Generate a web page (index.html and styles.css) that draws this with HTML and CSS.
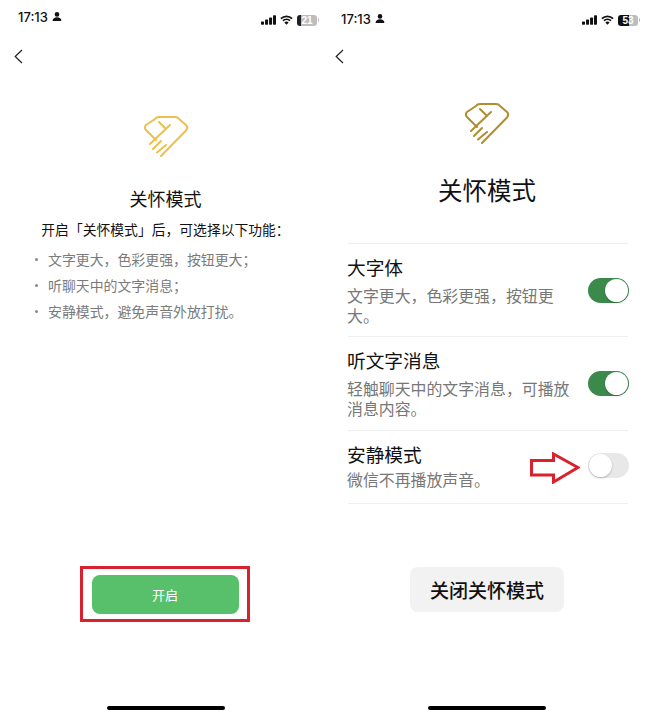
FILE: index.html
```html
<!DOCTYPE html>
<html lang="zh-CN">
<head>
    <meta charset="UTF-8">
    <meta name="viewport" content="width=device-width, initial-scale=1.0">
    <title>关怀模式</title>
    <link rel="stylesheet" href="styles.css">
</head>
<body>
    <div class="screens">
        <!-- Before turning it on -->
        <section class="phone phone-intro">
            <div class="status-bar">
                <div class="status-time">
                    <span>17:13</span>
                    <svg class="person-icon" viewBox="0 0 10 9"><circle cx="5" cy="2.4" r="2.3"/><path d="M.6 9c0-2.6 2-3.7 4.4-3.7S9.400 6.400 9.400 9z"/></svg>
                </div>
                <div class="status-icons">
                    <svg class="signal-icon" viewBox="0 0 16 10"><rect x="0" y="6.500" width="3.200" height="3.500" rx=".7"/><rect x="4.300" y="4.500" width="3.200" height="5.500" rx=".7"/><rect x="8.600" y="2.300" width="3.200" height="7.700" rx=".7"/><rect x="12.800" y="0" width="3.200" height="10" rx=".7"/></svg>
                    <svg class="wifi-icon" viewBox="0 0 14 10"><path d="M1 3.500a8.500 8.500 0 0 1 12 0M3.200 5.800a5.400 5.400 0 0 1 7.600 0" fill="none" stroke="#111" stroke-width="1.900"/><path d="M7 10 4.700 7.700a3.200 3.200 0 0 1 4.600 0z"/></svg>
                    <div class="battery battery-low"><span class="battery-level">21</span></div>
                </div>
            </div>
            <div class="nav">
                <svg class="back-icon" viewBox="0 0 9 15"><path d="M8 1 1.200 7.500 8 14"/></svg>
            </div>
            <main class="intro">
                <svg class="care-icon care-icon-light" viewBox="0 0 46 44"><path d="M27 11 7 30M16 8l7 7M18 27l-8 8M23 31l-9 7.500M18 42 43 16.500c1.500-2 1.500-4 0-5.500L36 5c-1-1.500-2-2-4-2H16c-2 0-3 .5-4 2L3 11c-1.500 1.500-1.500 3.500 0 5L13 26"/></svg>
                <h1 class="intro-title">关怀模式</h1>
                <p class="intro-lead">开启「关怀模式」后，可选择以下功能：</p>
                <ul class="intro-list">
                    <li>文字更大，色彩更强，按钮更大；</li>
                    <li>听聊天中的文字消息；</li>
                    <li>安静模式，避免声音外放打扰。</li>
                </ul>
                <div class="highlight-frame">
                    <button class="open-button">开启</button>
                </div>
            </main>
            <div class="home-bar"></div>
        </section>

        <!-- After turning it on -->
        <section class="phone phone-settings">
            <div class="status-bar status-bar-low">
                <div class="status-time">
                    <span>17:13</span>
                    <svg class="person-icon" viewBox="0 0 10 9"><circle cx="5" cy="2.4" r="2.3"/><path d="M.6 9c0-2.6 2-3.7 4.4-3.7S9.400 6.400 9.400 9z"/></svg>
                </div>
                <div class="status-icons">
                    <svg class="signal-icon" viewBox="0 0 16 10"><rect x="0" y="6.500" width="3.200" height="3.500" rx=".7"/><rect x="4.300" y="4.500" width="3.200" height="5.500" rx=".7"/><rect x="8.600" y="2.300" width="3.200" height="7.700" rx=".7"/><rect x="12.800" y="0" width="3.200" height="10" rx=".7"/></svg>
                    <svg class="wifi-icon" viewBox="0 0 14 10"><path d="M1 3.500a8.500 8.500 0 0 1 12 0M3.200 5.800a5.400 5.400 0 0 1 7.600 0" fill="none" stroke="#111" stroke-width="1.900"/><path d="M7 10 4.700 7.700a3.200 3.200 0 0 1 4.600 0z"/></svg>
                    <div class="battery battery-half"><span class="battery-level">53</span></div>
                </div>
            </div>
            <div class="nav nav-settings">
                <svg class="back-icon" viewBox="0 0 9 15"><path d="M8 1 1.200 7.500 8 14"/></svg>
            </div>
            <main class="settings">
                <svg class="care-icon care-icon-dark" viewBox="0 0 46 44"><path d="M27 11 7 30M16 8l7 7M18 27l-8 8M23 31l-9 7.500M18 42 43 16.500c1.500-2 1.500-4 0-5.500L36 5c-1-1.500-2-2-4-2H16c-2 0-3 .5-4 2L3 11c-1.500 1.500-1.500 3.500 0 5L13 26"/></svg>
                <h1 class="settings-title">关怀模式</h1>
                <div class="setting-list">
                    <div class="setting-row">
                        <div class="setting-text">
                            <div class="setting-name">大字体</div>
                            <div class="setting-desc">文字更大，色彩更强，按钮更大。</div>
                        </div>
                        <div class="toggle toggle-on"><span class="toggle-thumb"></span></div>
                    </div>
                    <div class="setting-row">
                        <div class="setting-text">
                            <div class="setting-name">听文字消息</div>
                            <div class="setting-desc">轻触聊天中的文字消息，可播放消息内容。</div>
                        </div>
                        <div class="toggle toggle-on"><span class="toggle-thumb"></span></div>
                    </div>
                    <div class="setting-row setting-row-short">
                        <div class="setting-text">
                            <div class="setting-name">安静模式</div>
                            <div class="setting-desc">微信不再播放声音。</div>
                        </div>
                        <svg class="red-arrow" viewBox="0 0 50 32"><path d="M1.500 8.500h22V2L48 15.500 23.500 30V23h-22z"/></svg>
                        <div class="toggle"><span class="toggle-thumb"></span></div>
                    </div>
                </div>
                <button class="close-button">关闭关怀模式</button>
            </main>
            <div class="home-bar"></div>
        </section>
    </div>
</body>
</html>
```

FILE: styles.css
```css
* {
    box-sizing: border-box;
}
body {
    margin: 0;
    background-color: #fff;
    color: #111;
    font-family: "Noto Sans CJK SC", "Noto Sans", sans-serif;
}
h1, p, ul {
    margin: 0;
    padding: 0;
}
button {
    border: none;
    font-family: inherit;
}
.screens {
    display: grid;
    grid-template-columns: 326px 322px;
    height: 717px;
    overflow: hidden;
}
.phone {
    display: flex;
    flex-direction: column;
    height: 717px;
}

/* status bar */
.status-bar {
    display: flex;
    justify-content: space-between;
    align-items: flex-start;
    height: 37px;
    padding: 9px 9px 0 18px;
}
.status-bar-low {
    padding: 11px 10px 0 15px;
}
.status-time {
    display: flex;
    align-items: center;
    gap: 4px;
    height: 16px;
    font-family: Inter, "Liberation Sans", sans-serif;
    font-size: 13px;
    font-weight: 500;
}
.person-icon {
    width: 10px;
    height: 9px;
    margin-top: -1px;
    fill: #111;
}
.status-icons {
    display: flex;
    align-items: center;
    gap: 4px;
    height: 10px;
    margin-top: 6px;
}
.status-bar-low .status-icons {
    margin-top: 4px;
}
.signal-icon {
    width: 15px;
    height: 10px;
    fill: #111;
}
.wifi-icon {
    width: 13px;
    height: 10px;
    fill: #111;
}
.battery {
    position: relative;
    display: flex;
    align-items: center;
    justify-content: center;
    width: 20px;
    height: 11px;
    border-radius: 3px;
    font-family: "Liberation Sans", sans-serif;
    font-size: 10px;
    font-weight: 700;
    line-height: 11px;
    color: #fff;
}
.battery::after {
    content: "";
    position: absolute;
    right: -2px;
    top: 3.500px;
    width: 1.500px;
    height: 4px;
    border-radius: 0 1px 1px 0;
    background-color: #bdbdbd;
}
.battery-low {
    background: linear-gradient(to right, #222 21%, #bdbdbd 21%);
}
.battery-half {
    background: linear-gradient(to right, #111 53%, #bdbdbd 53%);
}

/* nav */
.nav {
    height: 30px;
    padding: 12px 0 0 14px;
}
.nav-settings {
    padding-left: 9px;
}
.back-icon {
    display: block;
    width: 9px;
    height: 15px;
    fill: none;
    stroke: #222;
    stroke-width: 1.200;
}

/* brand mark */
.care-icon {
    display: block;
    flex: none;
    width: 46px;
    height: 44px;
    fill: none;
    stroke-width: 2;
    stroke-linecap: round;
    stroke-linejoin: round;
}
.care-icon-light {
    stroke: #edc04d;
}
.care-icon-dark {
    stroke: #b08d2e;
}

/* left screen */
.intro {
    flex: 1;
    display: flex;
    flex-direction: column;
    align-items: center;
    padding-left: 5px;
}
.phone-intro .care-icon {
    margin-top: 47px;
}
.intro-title {
    margin-top: 27px;
    font-size: 18px;
    font-weight: 400;
    line-height: 26px;
}
.intro-lead {
    margin-top: 6px;
    font-size: 13.800px;
    line-height: 24px;
}
.intro-list {
    align-self: flex-start;
    margin-top: 6px;
    padding-left: 43px;
    list-style: none;
}
.intro-list li {
    position: relative;
    font-size: 13.900px;
    line-height: 25.800px;
    color: #7a7a7a;
}
.intro-list li::before {
    content: "";
    position: absolute;
    left: -13px;
    top: 11px;
    width: 3px;
    height: 3px;
    border-radius: 50%;
    background-color: #8a8a8a;
}
.highlight-frame {
    display: flex;
    align-items: center;
    justify-content: center;
    width: 170px;
    height: 56px;
    margin-top: auto;
    margin-bottom: 84px;
    margin-left: -1px;
    border: 3px solid #d8232f;
}
.open-button {
    width: 147px;
    height: 39px;
    border-radius: 8px;
    background-color: #58bf6b;
    color: #fff;
    font-size: 13px;
}

/* right screen */
.settings {
    flex: 1;
    display: flex;
    flex-direction: column;
    align-items: center;
}
.phone-settings .care-icon {
    margin-top: 34px;
}
.settings-title {
    margin-top: 27px;
    font-size: 24.500px;
    font-weight: 400;
    line-height: 36px;
}
.setting-list {
    width: 280px;
    margin-top: 35px;
    margin-left: 2px;
    border-top: 1px solid #eee;
}
.setting-row {
    position: relative;
    display: flex;
    align-items: center;
    justify-content: space-between;
    padding: 10px 0 10.250px;
    border-bottom: 1px solid #eee;
}
.setting-row-short {
    padding-bottom: 13px;
}
.setting-text {
    width: 230px;
    margin-left: -1px;
}
.setting-name {
    font-size: 18.700px;
    line-height: 26px;
}
.setting-desc {
    margin-top: 6px;
    font-size: 15.900px;
    line-height: 20px;
    color: #777;
}
.setting-row-short .setting-desc {
    margin-top: 3px;
}
.toggle {
    flex: none;
    display: flex;
    width: 41px;
    height: 25px;
    margin-right: -1px;
    padding: 1px;
    border-radius: 13px;
    background-color: #e8e8e8;
}
.toggle-on {
    justify-content: flex-end;
    background-color: #3b8a4c;
}
.toggle-thumb {
    width: 23px;
    height: 23px;
    border-radius: 50%;
    background-color: #fff;
    box-shadow: 0 1px 2px rgba(0, 0, 0, 0.25);
}
.red-arrow {
    position: absolute;
    left: 182px;
    top: 21px;
    width: 50px;
    height: 32px;
    fill: #fff;
    stroke: #d8232f;
    stroke-width: 3;
    stroke-linejoin: miter;
}
.close-button {
    width: 154px;
    height: 45px;
    margin-top: auto;
    margin-bottom: 94px;
    border-radius: 8px;
    background-color: #f2f2f2;
    color: #111;
    font-size: 19px;
    font-weight: 500;
}

.home-bar {
    flex: none;
    width: 118px;
    height: 4px;
    margin: 0 0 7px;
    border-radius: 2px;
    background-color: #000;
}
.phone-intro .home-bar {
    margin-left: 107px;
}
.phone-settings .home-bar {
    margin-left: 102px;
}
```
